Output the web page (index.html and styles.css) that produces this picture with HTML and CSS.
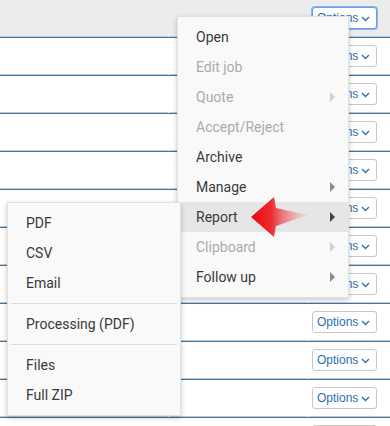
FILE: index.html
```html
<!DOCTYPE html>
<html lang="en">
<head>
    <meta charset="UTF-8">
    <meta name="viewport" content="width=device-width, initial-scale=1.0">
    <title>Jobs - Options menu</title>
    <link rel="stylesheet" href="styles.css">
</head>
<body>

<div class="table">
    <div class="row head">
        <div class="cell wide"></div>
        <div class="cell mid"></div>
        <div class="cell act">
            <button class="opt focus">Options <svg width="9" height="6" viewBox="0 0 9 6"><polyline points="1,1 4.5,4.5 8,1" fill="none" stroke="currentColor" stroke-width="1.3"/></svg></button>
        </div>
    </div>
    <div class="row"><div class="cell wide"></div><div class="cell mid"></div><div class="cell act"><button class="opt">Options <svg width="9" height="6" viewBox="0 0 9 6"><polyline points="1,1 4.5,4.5 8,1" fill="none" stroke="currentColor" stroke-width="1.3"/></svg></button></div></div>
    <div class="row"><div class="cell wide"></div><div class="cell mid"></div><div class="cell act"><button class="opt">Options <svg width="9" height="6" viewBox="0 0 9 6"><polyline points="1,1 4.5,4.5 8,1" fill="none" stroke="currentColor" stroke-width="1.3"/></svg></button></div></div>
    <div class="row"><div class="cell wide"></div><div class="cell mid"></div><div class="cell act"><button class="opt">Options <svg width="9" height="6" viewBox="0 0 9 6"><polyline points="1,1 4.5,4.5 8,1" fill="none" stroke="currentColor" stroke-width="1.3"/></svg></button></div></div>
    <div class="row"><div class="cell wide"></div><div class="cell mid"></div><div class="cell act"><button class="opt">Options <svg width="9" height="6" viewBox="0 0 9 6"><polyline points="1,1 4.5,4.5 8,1" fill="none" stroke="currentColor" stroke-width="1.3"/></svg></button></div></div>
    <div class="row"><div class="cell wide"></div><div class="cell mid"></div><div class="cell act"><button class="opt">Options <svg width="9" height="6" viewBox="0 0 9 6"><polyline points="1,1 4.5,4.5 8,1" fill="none" stroke="currentColor" stroke-width="1.3"/></svg></button></div></div>
    <div class="row"><div class="cell wide"></div><div class="cell mid"></div><div class="cell act"><button class="opt">Options <svg width="9" height="6" viewBox="0 0 9 6"><polyline points="1,1 4.5,4.5 8,1" fill="none" stroke="currentColor" stroke-width="1.3"/></svg></button></div></div>
    <div class="row"><div class="cell wide"></div><div class="cell mid"></div><div class="cell act"><button class="opt">Options <svg width="9" height="6" viewBox="0 0 9 6"><polyline points="1,1 4.5,4.5 8,1" fill="none" stroke="currentColor" stroke-width="1.3"/></svg></button></div></div>
    <div class="row"><div class="cell wide"></div><div class="cell mid"></div><div class="cell act"><button class="opt">Options <svg width="9" height="6" viewBox="0 0 9 6"><polyline points="1,1 4.5,4.5 8,1" fill="none" stroke="currentColor" stroke-width="1.3"/></svg></button></div></div>
    <div class="row"><div class="cell wide"></div><div class="cell mid"></div><div class="cell act"><button class="opt">Options <svg width="9" height="6" viewBox="0 0 9 6"><polyline points="1,1 4.5,4.5 8,1" fill="none" stroke="currentColor" stroke-width="1.3"/></svg></button></div></div>
    <div class="row"><div class="cell wide"></div><div class="cell mid"></div><div class="cell act"><button class="opt">Options <svg width="9" height="6" viewBox="0 0 9 6"><polyline points="1,1 4.5,4.5 8,1" fill="none" stroke="currentColor" stroke-width="1.3"/></svg></button></div></div>
    <div class="row"><div class="cell wide"></div><div class="cell mid"></div><div class="cell act"><button class="opt">Options <svg width="9" height="6" viewBox="0 0 9 6"><polyline points="1,1 4.5,4.5 8,1" fill="none" stroke="currentColor" stroke-width="1.3"/></svg></button></div></div>
</div>

<!-- context menu opened from the header Options button -->
<ul class="menu main-menu">
    <li>Open</li>
    <li class="disabled">Edit job</li>
    <li class="disabled sub">Quote</li>
    <li class="disabled">Accept/Reject</li>
    <li>Archive</li>
    <li class="sub">Manage</li>
    <li class="sub active">Report</li>
    <li class="disabled sub">Clipboard</li>
    <li class="sub">Follow up</li>
</ul>

<ul class="menu report-menu">
    <li>PDF</li>
    <li>CSV</li>
    <li>Email</li>
    <li class="divider"></li>
    <li>Processing (PDF)</li>
    <li class="divider"></li>
    <li>Files</li>
    <li>Full ZIP</li>
</ul>

<svg class="pointer" width="70" height="56" viewBox="0 0 70 56">
    <defs>
        <linearGradient id="redFade" x1="0" y1="0" x2="1" y2="0">
            <stop offset="0" stop-color="#e8080c"/>
            <stop offset="0.35" stop-color="#ec2a2e"/>
            <stop offset="1" stop-color="#f09a9a" stop-opacity="0.15"/>
        </linearGradient>
    </defs>
    <polygon points="6,27 29,7 31,18 63,25 31,36 29,47" fill="url(#redFade)"/>
</svg>

</body>
</html>
```

FILE: styles.css
```css
body {
    margin: 0;
    padding: 0;
    background-color: white;
    font-family: 'Roboto', 'Liberation Sans', sans-serif;
    overflow: hidden;
    height: 426px;
}

.table {
    width: 390px;
    height: 426px;
    overflow: hidden;
}

.row {
    display: flex;
    gap: 1px;
    height: 37px;
    border-top: 1px solid #3677b0;
}

.row.head {
    border-top: none;
    background-color: #ececec;
}

.cell {
    height: 36px;
    border-bottom: 1px solid #c9c9c9;
    display: flex;
    align-items: center;
}

.cell.wide {
    width: 168px;
}

.cell.mid {
    width: 138px;
}

.cell.act {
    flex: 1;
    padding-left: 4px;
}

.opt {
    display: flex;
    align-items: center;
    gap: 3px;
    width: 65px;
    height: 22px;
    padding: 0 0 0 4px;
    background: white;
    border: 1px solid #c8c8c8;
    border-radius: 3px;
    color: #2a6fb0;
    font-family: 'Liberation Sans', Arial, sans-serif;
    font-size: 12px;
    cursor: pointer;
}

.opt svg {
    margin-top: 1px;
}

.opt.focus {
    border-color: #6d9ee8;
    box-shadow: 0 0 0 1px #8db3ee;
}

.menu {
    position: absolute;
    margin: 0;
    padding: 5px 0;
    list-style: none;
    background-color: #f9f9f9;
    border: 1px solid #e2e2e2;
    box-shadow: 0 2px 5px rgba(0, 0, 0, 0.22);
    font-size: 14px;
    color: #3a3a3a;
}

.menu li {
    height: 30px;
    line-height: 30px;
    padding: 0 14px 0 18px;
    position: relative;
}

.menu li.disabled {
    color: #ababab;
}

.menu li.active {
    background-color: #e6e6e6;
}

.menu li.sub::after {
    content: '';
    position: absolute;
    right: 13px;
    top: 10px;
    border-left: 5px solid #8a8a8a;
    border-top: 5px solid transparent;
    border-bottom: 5px solid transparent;
}

.menu li.disabled.sub::after {
    border-left-color: #cfcfcf;
}

.menu li.active::after {
    border-left-color: #444;
}

.menu li.divider {
    height: 1px;
    padding: 0;
    margin: 5px 3px;
    background-color: #dcdcdc;
}

.main-menu {
    left: 177px;
    top: 16px;
    width: 170px;
}

.report-menu {
    left: 7px;
    top: 202px;
    width: 172px;
    z-index: 2;
}

.pointer {
    position: absolute;
    left: 245px;
    top: 190px;
    z-index: 3;
}
```
